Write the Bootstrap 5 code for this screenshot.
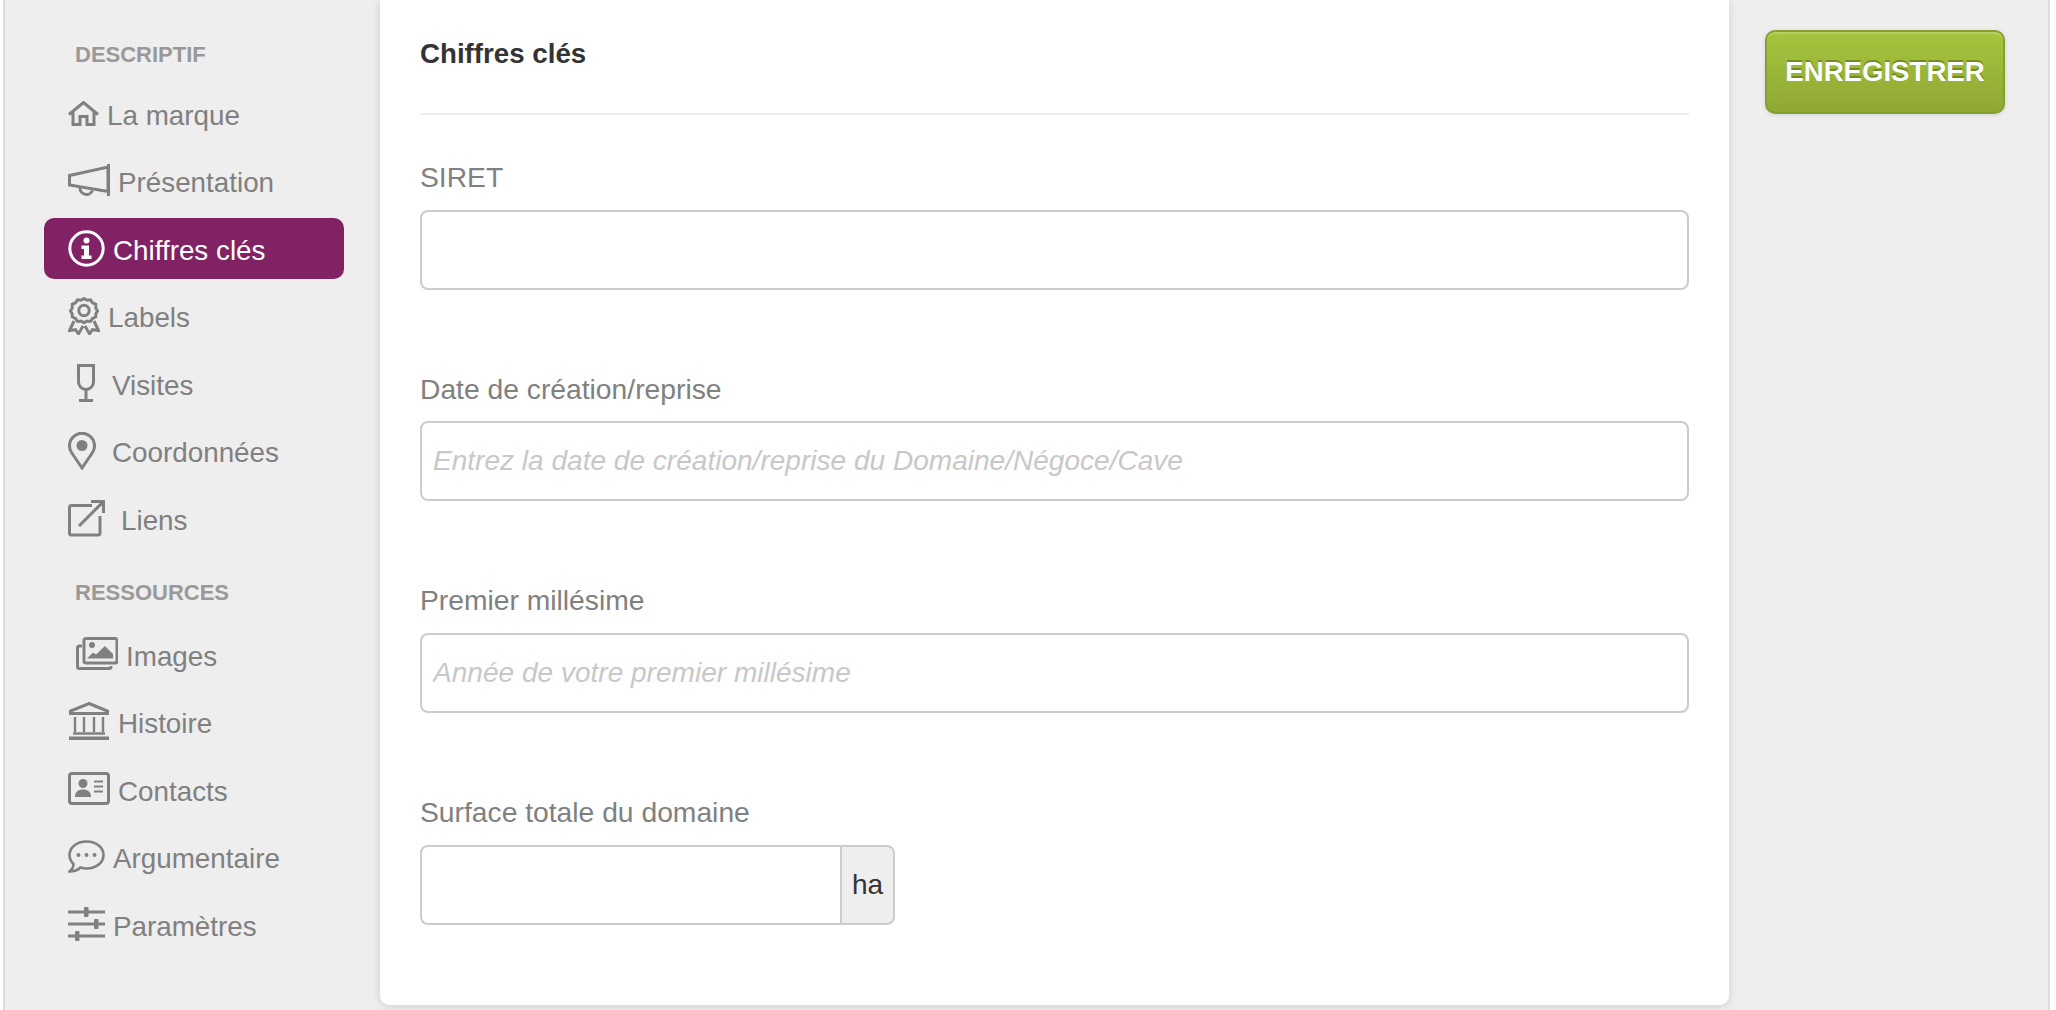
<!DOCTYPE html>
<html lang="fr">
<head>
<meta charset="utf-8">
<title>Chiffres clés</title>
<link href="https://cdn.jsdelivr.net/npm/bootstrap@5.3.0/dist/css/bootstrap.min.css" rel="stylesheet">
<style>
html,body{height:1010px;overflow:hidden;}
body{background:#fff;font-family:"Liberation Sans",Arial,sans-serif;color:#808080;}
.shell{height:1010px;margin:0 6px 0 3px;background:#eee;border-left:2px solid #ddd;border-right:2px solid #ddd;}
.side{width:375px;flex:none;padding-left:39px;}
.side-head{font-size:22px;font-weight:700;color:#999;line-height:28px;padding-left:31px;margin:0 0 13.8px;}
.side-head.first{padding-top:41px;}
.side-head.second{margin-top:23.7px;margin-bottom:16.5px;}
.side-list{width:300px;}
.side-list .nav-link{height:61px;margin-bottom:6.5px;padding:0 0 0 24px;display:flex;align-items:center;font-size:27.8px;color:#808080;border-radius:10px;line-height:1;}
.side-list .nav-link span{position:relative;top:2.5px;}
.side-list .nav-link.active{background:#802263;color:#fff;}
.side-list svg{flex:none;fill:none;stroke:#808080;stroke-width:3;}
.side-list .active svg{stroke:#fff;}
.side-list svg .solid{fill:#808080;stroke:none;}
.side-list .active svg .solid{fill:#fff;}
.gap-a{margin-right:8px;}
.gap-b{margin-right:8px;}
.gap-c{margin-right:16px;}
.gap-d{margin-right:8px;}
.gap-e{margin-right:16px;}
.shift{margin-left:8px;}
.sheet{width:1349px;height:1005px;flex:none;background:#fff;border-radius:0 0 9px 9px;box-shadow:0 1px 8px rgba(0,0,0,.14);padding:35px 40px 0 40px;}
.sheet-title{font-size:27.7px;font-weight:700;color:#333;line-height:38px;margin:0;padding-bottom:40px;border-bottom:2px solid #eee;}
.field{margin:0;height:211.7px;}
.first-field{margin-top:46px;}
.field .form-label{font-size:28.25px;line-height:33px;color:#808080;margin:0 0 15.5px;display:block;}
.field .form-control{height:80px;border:2.6px solid #ccc;border-radius:8px;font-size:28.05px;padding:0 11px;box-shadow:none;font-family:inherit;}
.field .form-control::placeholder{color:#c8c8c8;font-style:italic;}
.size-group{width:475px;}
.size-group .form-control{border-right:0;}
.size-group .input-group-text{width:55px;justify-content:center;background:#eee;border:2.6px solid #ccc;border-radius:0 8px 8px 0;font-size:28.05px;color:#333;padding:0;margin-left:0!important;}
.rail{flex:1;padding:30px 0 0 36px;}
.save-btn{width:240px;height:84px;padding:0;font-size:27.6px;font-weight:700;color:#fff;background:linear-gradient(#a6c53e,#8fa833);border:2px solid #86a030;border-radius:10px;box-shadow:inset 0 2px 0 rgba(255,255,255,.2),0 1px 4px rgba(0,0,0,.12);text-shadow:0 -2px 0 rgba(80,100,20,.55);}
</style>
</head>
<body>
<div class="shell d-flex">
  <aside class="side">
    <div class="side-head first">DESCRIPTIF</div>
    <nav class="side-list nav flex-column">
      <a class="nav-link" href="#"><svg class="gap-a" width="31" height="25" viewBox="0 0 31 25"><path d="M1 13.500 15.500 1.500 30 13.500M5 10.500V23.500H12V15.500H19V23.500H26V10.500"/></svg><span>La marque</span></a>
      <a class="nav-link" href="#"><svg class="gap-b" width="42" height="33" viewBox="0 0 42 33"><path d="M1.500 11.500 40 3V27.500L1.500 21ZM40.500 0V32"/><path d="M12 24a6.500 6.500 0 0 0 12.500 2.500"/></svg><span>Présentation</span></a>
      <a class="nav-link active" href="#"><svg class="gap-a" width="37" height="37" viewBox="0 0 37 37"><circle cx="18.500" cy="18.500" r="16.700"/><circle class="solid" cx="18.500" cy="10.500" r="3"/><path class="solid" d="M13.500 15.500h7.500v10h2.500v3.500h-10v-3.500h2.500v-6.500h-2.500z"/></svg><span>Chiffres clés</span></a>
      <a class="nav-link" href="#"><svg class="gap-a" width="32" height="38" viewBox="0 0 32 38"><path d="M16 1.500l3 1.800 3.500-.5 2 3 3.300 1.500v3.600l1.700 3-1.700 3v3l-3.300 1.600-2 3-3.500-.5-3 1.800-3-1.800-3.500.5-2-3-3.300-1.600v-3l-1.700-3 1.700-3V7.300l3.300-1.500 2-3 3.500.5z"/><circle cx="16" cy="13.500" r="5.200"/><path d="M6 24 1.500 33.500l6-.8 3 4.200 4.500-8M26 24l4.500 9.500-6-.8-3 4.200-4.500-8"/></svg><span>Labels</span></a>
      <a class="nav-link" href="#"><svg class="shift gap-e" width="20" height="38" viewBox="0 0 20 38"><path d="M2.500 1.500H17.500V18A7.500 7.500 0 0 1 2.500 18ZM10 25V36M3 36.500H17"/></svg><span>Visites</span></a>
      <a class="nav-link" href="#"><svg class="gap-c" width="28" height="38" viewBox="0 0 28 38"><path d="M14 36 3.500 20.500A12.500 12.500 0 1 1 24.500 20.500Z"/><circle class="solid" cx="14" cy="13.500" r="5.500"/></svg><span>Coordonnées</span></a>
      <a class="nav-link" href="#"><svg class="gap-c" width="37" height="38" viewBox="0 0 37 38"><path d="M24 6.500H3.500a2 2 0 0 0-2 2V34a2 2 0 0 0 2 2H30a2 2 0 0 0 2-2V17M11 27 35 3M23 2.500H35.500V14"/></svg><span>Liens</span></a>
    </nav>
    <div class="side-head second">RESSOURCES</div>
    <nav class="side-list nav flex-column">
      <a class="nav-link" href="#"><svg class="shift gap-d" width="42" height="33" viewBox="0 0 42 33"><rect x="8" y="1.500" width="33" height="24.500" rx="2"/><path d="M6 9H3.500a2 2 0 0 0-2 2V29.500a2 2 0 0 0 2 2H33a2 2 0 0 0 2-2V29"/><circle class="solid" cx="16" cy="8" r="3"/><path class="solid" d="M11 21.500 17 15.500 20 17.500 29 9 37 17V21.500Z"/></svg><span>Images</span></a>
      <a class="nav-link" href="#"><svg class="gap-b" width="42" height="38" viewBox="0 0 42 38"><path d="M21 1.500 39.500 9V11.500H2.500V9Z"/><path d="M7 15V30M16 15V30M26 15V30M35 15V30M5 31.500H37" stroke-width="2.400"/><path d="M1 36.200H41" stroke-width="3.400"/></svg><span>Histoire</span></a>
      <a class="nav-link" href="#"><svg class="gap-b" width="42" height="33" viewBox="0 0 42 33"><rect x="1.500" y="1.500" width="39" height="30" rx="2.500"/><circle class="solid" cx="15" cy="11.500" r="4.500"/><path class="solid" d="M7 25c0-5 3-7.500 8-7.500s8 2.500 8 7.500z"/><path d="M26 9.500H35M26 14.500H35M26 19.500H35" stroke-width="2"/></svg><span>Contacts</span></a>
      <a class="nav-link" href="#"><svg class="gap-a" width="37" height="33" viewBox="0 0 37 33"><path d="M18.500 1.500C8.500 1.500 1.500 7.500 1.500 15 1.500 18.500 3 21.500 5.500 24 5.500 27 3.500 30 1.500 31.500 6.500 31.500 10.500 29.500 12.500 27.500 14.500 28.200 16.500 28.500 18.500 28.500 28.500 28.500 35.500 22.500 35.500 15 35.500 7.500 28.500 1.500 18.500 1.500Z" stroke-width="2.600"/><circle class="solid" cx="10.500" cy="15" r="2"/><circle class="solid" cx="18.500" cy="15" r="2"/><circle class="solid" cx="26.500" cy="15" r="2"/></svg><span>Argumentaire</span></a>
      <a class="nav-link" href="#"><svg class="gap-a" width="37" height="34" viewBox="0 0 37 34"><path d="M0 5H37M0 17H37M0 29H37"/><rect class="solid" x="16" y="0" width="4.500" height="10" rx="1"/><rect class="solid" x="26" y="12" width="4.500" height="10" rx="1"/><rect class="solid" x="7" y="24" width="4.500" height="10" rx="1"/></svg><span>Paramètres</span></a>
    </nav>
  </aside>
  <main class="sheet">
    <h2 class="sheet-title">Chiffres clés</h2>
    <form>
      <div class="field first-field"><label class="form-label" for="f1">SIRET</label><input id="f1" class="form-control" type="text"></div>
      <div class="field"><label class="form-label" for="f2">Date de création/reprise</label><input id="f2" class="form-control" type="text" placeholder="Entrez la date de création/reprise du Domaine/Négoce/Cave"></div>
      <div class="field"><label class="form-label" for="f3">Premier millésime</label><input id="f3" class="form-control" type="text" placeholder="Année de votre premier millésime"></div>
      <div class="field"><label class="form-label" for="f4">Surface totale du domaine</label><div class="input-group size-group"><input id="f4" class="form-control" type="text"><span class="input-group-text">ha</span></div></div>
    </form>
  </main>
  <div class="rail"><button type="button" class="btn save-btn">ENREGISTRER</button></div>
</div>
<script src="https://cdn.jsdelivr.net/npm/bootstrap@5.3.0/dist/js/bootstrap.bundle.min.js"></script>
</body>
</html>
